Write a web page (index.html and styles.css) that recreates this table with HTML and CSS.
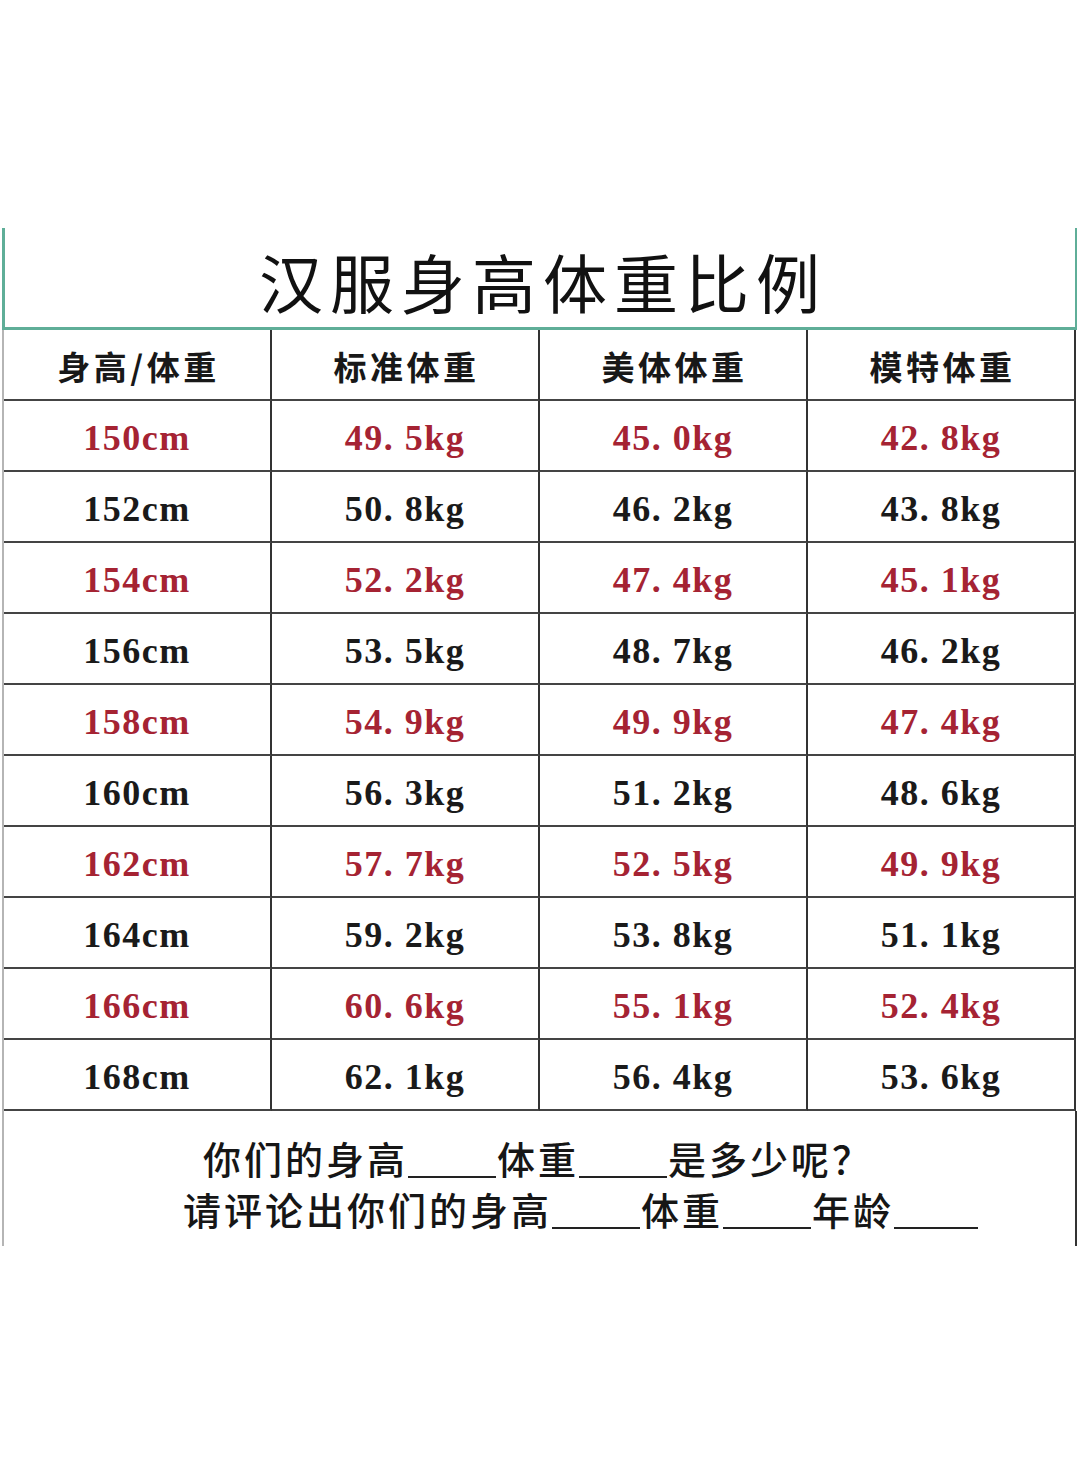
FILE: index.html
```html
<!DOCTYPE html>
<html lang="zh">
<head>
<meta charset="utf-8">
<title>汉服身高体重比例</title>
<link rel="stylesheet" href="styles.css">
</head>
<body>
<div class="sheet">
  <div class="title">汉服身高体重比例</div>
  <div class="grid">
    <div class="cell head">身高/体重</div>
    <div class="cell head">标准体重</div>
    <div class="cell head">美体体重</div>
    <div class="cell head">模特体重</div>

    <div class="cell num red">150cm</div><div class="cell num red">49. 5kg</div><div class="cell num red">45. 0kg</div><div class="cell num red">42. 8kg</div>
    <div class="cell num">152cm</div><div class="cell num">50. 8kg</div><div class="cell num">46. 2kg</div><div class="cell num">43. 8kg</div>
    <div class="cell num red">154cm</div><div class="cell num red">52. 2kg</div><div class="cell num red">47. 4kg</div><div class="cell num red">45. 1kg</div>
    <div class="cell num">156cm</div><div class="cell num">53. 5kg</div><div class="cell num">48. 7kg</div><div class="cell num">46. 2kg</div>
    <div class="cell num red">158cm</div><div class="cell num red">54. 9kg</div><div class="cell num red">49. 9kg</div><div class="cell num red">47. 4kg</div>
    <div class="cell num">160cm</div><div class="cell num">56. 3kg</div><div class="cell num">51. 2kg</div><div class="cell num">48. 6kg</div>
    <div class="cell num red">162cm</div><div class="cell num red">57. 7kg</div><div class="cell num red">52. 5kg</div><div class="cell num red">49. 9kg</div>
    <div class="cell num">164cm</div><div class="cell num">59. 2kg</div><div class="cell num">53. 8kg</div><div class="cell num">51. 1kg</div>
    <div class="cell num red">166cm</div><div class="cell num red">60. 6kg</div><div class="cell num red">55. 1kg</div><div class="cell num red">52. 4kg</div>
    <div class="cell num">168cm</div><div class="cell num">62. 1kg</div><div class="cell num">56. 4kg</div><div class="cell num">53. 6kg</div>
  </div>
  <div class="footer">
    <div class="line line1">你们的身高<span class="blank"></span>体重<span class="blank"></span>是多少呢？</div>
    <div class="line line2">请评论出你们的身高<span class="blank"></span>体重<span class="blank"></span>年龄<span class="blank short"></span></div>
  </div>
</div>
</body>
</html>
```
FILE: styles.css
```css
html, body {
  margin: 0;
  padding: 0;
  background: #ffffff;
}
body {
  width: 1080px;
  height: 1476px;
  overflow: hidden;
  font-family: "Noto Sans CJK SC", "Noto Sans", sans-serif;
  color: #151515;
}
.sheet {
  margin-top: 228px;
  margin-left: 2px;
  width: 1075px;
}
.title {
  box-sizing: border-box;
  height: 102px;
  border-left: 3px solid #5fae98;
  border-right: 2px solid #5fae98;
  border-bottom: 3px solid #5fae98;
  text-align: center;
  font-size: 64px;
  font-weight: 400;
  letter-spacing: 7px;
  line-height: 104px;
  color: #111;
  padding-left: 6px;
}
.grid {
  display: grid;
  grid-template-columns: repeat(4, 268px);
  grid-auto-rows: 71px;
  border-left: 2px solid #b5b5b5;
}
.cell {
  box-sizing: border-box;
  border-right: 2px solid #333;
  border-bottom: 2px solid #444;
  display: flex;
  align-items: center;
  justify-content: center;
}
.head {
  font-size: 33px;
  font-weight: 700;
  letter-spacing: 3.5px;
  color: #181818;
  padding-top: 2px;
  padding-left: 3px;
}
.num {
  font-family: "Liberation Serif", "DejaVu Serif", serif;
  font-weight: 700;
  font-size: 36px;
  letter-spacing: 1.5px;
  color: #1a1a1a;
  padding-top: 4px;
  white-space: pre;
}
.red {
  color: #a52333;
}
.footer {
  box-sizing: border-box;
  height: 135px;
  border-left: 2px solid #b5b5b5;
  border-right: 2px solid #333;
  padding-top: 21px;
}
.line {
  font-size: 38px;
  font-weight: 500;
  letter-spacing: 3px;
  line-height: 51px;
  white-space: nowrap;
  color: #161616;
}
.line1 {
  padding-left: 199px;
}
.line2 {
  padding-left: 179px;
}
.blank {
  display: inline-block;
  width: 88px;
  height: 1px;
  border-bottom: 2px solid #222;
  margin-right: 1px;
  vertical-align: -4px;
}
.blank.short {
  width: 84px;
}
```
